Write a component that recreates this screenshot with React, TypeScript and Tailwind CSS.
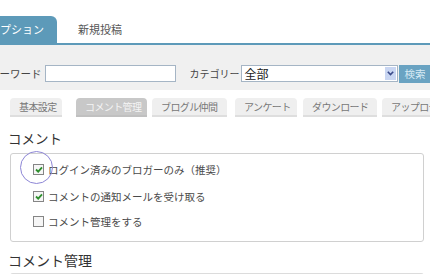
import React from "react";

const subTabs = [
  { label: "基本設定", cls: "ml-[10px] w-[52px]" },
  { label: "コメント管理", cls: "ml-[14px] w-[71px]" },
  { label: "ブログル仲間", cls: "ml-[5px] w-[75px]" },
  { label: "アンケート", cls: "ml-[8px] w-[62px]" },
  { label: "ダウンロード", cls: "ml-[6px] w-[74px]" },
  { label: "アップロード", cls: "ml-[5px] w-[74px]" },
];

const CheckBox = ({ checked }: { checked: boolean }) => (
  <span className="flex h-[11px] w-[11px] shrink-0 items-center justify-center border border-[#858585] bg-[#f6f6f6]">
    {checked && (
      <svg width="8" height="7" viewBox="0 0 8 7">
        <path d="M1 3.5 L3.2 5.7 L7 1.3" stroke="#2f8f2f" strokeWidth="1.8" fill="none" />
      </svg>
    )}
  </span>
);

export default function App() {
  return (
    <div className="relative h-[274px] w-[430px] overflow-hidden whitespace-nowrap bg-white font-['Noto_Sans_CJK_JP',sans-serif] text-[#333]">
      {/* Top tabs */}
      <div className="flex h-[45px] items-end border-b-2 border-[#5d9ab9]">
        <div className="ml-[-20px] flex h-[27px] w-[77px] shrink-0 items-center rounded-tr-[6px] bg-[#5d9ab9] pl-[9px] text-[11px] text-white">
          オプション
        </div>
        <div className="flex h-[27px] shrink-0 items-center pl-[21px] text-[11px] text-[#555]">新規投稿</div>
      </div>

      {/* Search bar */}
      <div className="flex h-[45px] items-start bg-[#f0f0f0] pt-[20px] text-[10.5px] text-[#444]">
        <span className="ml-[-11px] flex h-[17px] shrink-0 items-center">キーワード</span>
        <div className="ml-[3px] h-[17px] w-[131px] shrink-0 border border-[#a5b5c5] bg-white" />
        <span className="ml-[14px] flex h-[17px] shrink-0 items-center text-[10px]">カテゴリー</span>
        <div className="ml-[1px] flex h-[17px] w-[157px] shrink-0 items-center justify-between border border-[#a5b5c5] bg-white pl-[3px] text-[12px] text-[#222]">
          <span>全部</span>
          <span className="mr-[1px] flex h-[13px] w-[11px] items-center justify-center bg-[#c9d6f2]">
            <svg width="7" height="5" viewBox="0 0 7 5">
              <path d="M0.8 0.8 L3.5 3.6 L6.2 0.8" stroke="#3a4a8a" strokeWidth="1.6" fill="none" />
            </svg>
          </span>
        </div>
        <div className="ml-[1px] flex h-[18px] w-[40px] shrink-0 items-center bg-[#6aa3c2] pl-[6px] text-[10.5px] text-[#d6eaf4]">
          検索
        </div>
      </div>

      {/* Sub tabs */}
      <div className="mt-[8px] flex h-[19px] items-end text-[10px] tracking-[-0.6px] text-[#777]">
        {subTabs.map((t, i) => (
          <div
            key={t.label}
            className={`flex h-[19px] shrink-0 items-center rounded-t-[4px] border-b-2 pl-[9px] ${t.cls} ${
              i === 1 ? "border-[#c0c0c0] bg-[#c8c8c8] text-[#f4f4f4]" : "border-[#dedede] bg-[#efefef]"
            }`}
          >
            {t.label}
          </div>
        ))}
      </div>

      {/* Comment section */}
      <div className="ml-[8px] mt-[12px] text-[13.5px] leading-[18px] text-[#333]">コメント</div>
      <div className="ml-[10px] mt-[6px] h-[89px] w-[414px] rounded-[3px] border border-[#d0d0d0] pl-[22px] pt-[7px] text-[10.5px] text-[#4a4a4a]">
        <div className="flex h-[17px] items-center gap-[4px]">
          <CheckBox checked />
          <span>ログイン済みのブロガーのみ（推奨）</span>
        </div>
        <div className="mt-[10px] flex h-[17px] items-center gap-[4px]">
          <CheckBox checked />
          <span>コメントの通知メールを受け取る</span>
        </div>
        <div className="mt-[8px] flex h-[17px] items-center gap-[4px]">
          <CheckBox checked={false} />
          <span>コメント管理をする</span>
        </div>
      </div>

      <div className="ml-[8px] mt-[8px] text-[14px] leading-[20px] text-[#333]">コメント管理</div>
      <div className="ml-[10px] mt-[3px] h-[20px] w-[414px] rounded-t-[3px] border-t border-[#dcdcdc]" />

      {/* Highlight circle */}
      <div className="absolute left-[20px] top-[151px] h-[33px] w-[33px] rounded-full border-[1.5px] border-[#8d86d6]" />
    </div>
  );
}
